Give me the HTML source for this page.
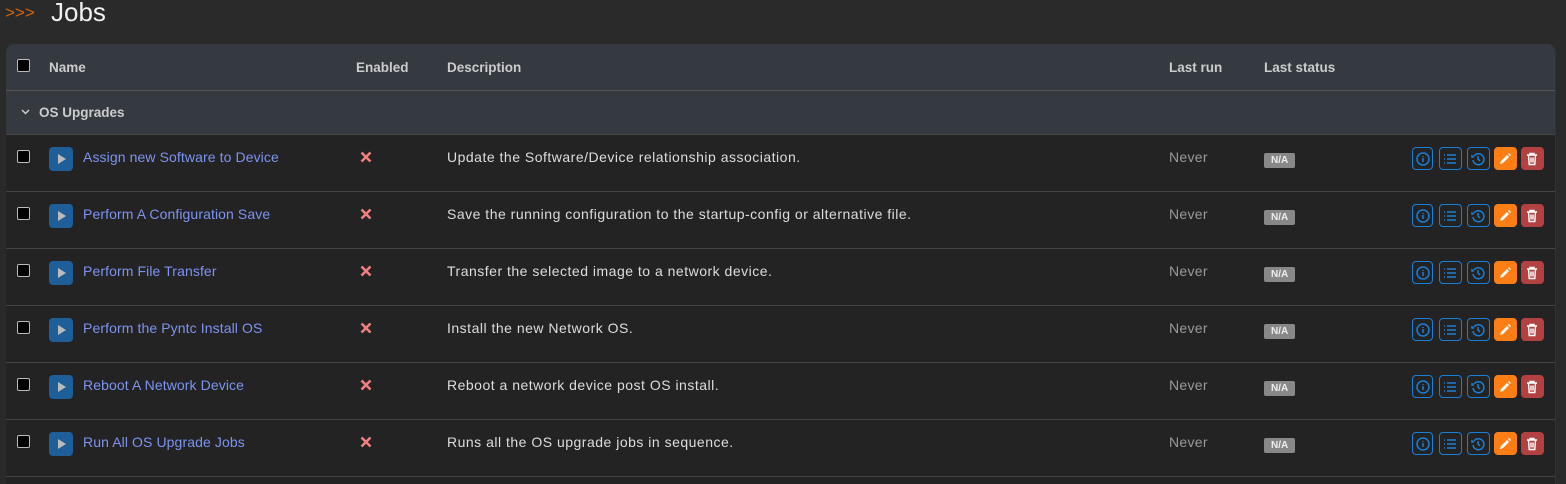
<!DOCTYPE html><html><head><style>
body{margin:0;background:#2a2a2a;width:1566px;height:478px;overflow:hidden;font-family:"Liberation Sans",sans-serif;color:#ddd}
.ar{position:absolute;left:5px;top:3px;color:#d8640a;font-size:17px;letter-spacing:0px}
.jt{position:absolute;left:51px;top:-3px;font-size:26px;color:#f0f0f0}
.panel{position:absolute;left:6px;top:44px;width:1549px;height:440px;background:#232323;border-radius:8px 8px 0 0;overflow:hidden;border-right:1px solid #333}
.hd{height:46px;background:#343a40;border-bottom:1px solid #555;position:relative;font-weight:bold;font-size:13.5px;color:#ccc}
.grp{height:43px;background:#343a40;border-bottom:1px solid #444;position:relative;font-weight:bold;font-size:13.5px;color:#ccc}
.row{height:56px;border-bottom:1px solid #444;position:relative;font-size:14px}
.a{position:absolute}
.cb{position:absolute;left:11px;width:11px;height:11px;background:#000;border:1px solid #bbb;border-radius:2px}
.play{position:absolute;left:43px;top:12px;width:24px;height:24px;background:#1e5f99;border-radius:4px}
.play:after{content:"";position:absolute;left:9px;top:7px;border-left:8px solid #bbb;border-top:5px solid transparent;border-bottom:5px solid transparent}
.nm{left:77px;top:14px;color:#7d93f0;letter-spacing:0.1px}
.x{left:352px;top:13px;color:#f08080;font-size:16px}
.ds{left:441px;top:14px;color:#ddd;letter-spacing:0.5px}
.nv{left:1163px;top:14px;color:#999;letter-spacing:0.3px}
.na{left:1258px;top:18px;background:#888;color:#eee;font-size:10px;font-weight:bold;padding:2px 7px;border-radius:2px}
.b{position:absolute;top:12px;width:21px;height:23px;border:1px solid #1a7fd6;border-radius:4px;box-sizing:border-box}
.b svg{position:absolute;left:3px;top:4px}
</style></head><body>
<div class="ar">&gt;&gt;&gt;</div><div class="jt">Jobs</div>
<div class="panel">
<div class="hd"><div class="cb" style="top:15px"></div><span class="a" style="left:43px;top:16px">Name</span><span class="a" style="left:350px;top:16px">Enabled</span><span class="a" style="left:441px;top:16px">Description</span><span class="a" style="left:1163px;top:16px">Last run</span><span class="a" style="left:1258px;top:16px">Last status</span></div>
<div class="grp"><svg class="a" style="left:15px;top:18px" width="9" height="6" viewBox="0 0 9 6"><path d="M1 1l3.5 3.5L8 1" stroke="#ccc" stroke-width="1.5" fill="none"/></svg><span class="a" style="left:33px;top:14px">OS Upgrades</span></div>
<div id="rows"></div>
</div>
<script>
var d=[["Assign new Software to Device","Update the Software/Device relationship association."],["Perform A Configuration Save","Save the running configuration to the startup-config or alternative file."],["Perform File Transfer","Transfer the selected image to a network device."],["Perform the Pyntc Install OS","Install the new Network OS."],["Reboot A Network Device","Reboot a network device post OS install."],["Run All OS Upgrade Jobs","Runs all the OS upgrade jobs in sequence."]];
var h="";
var ic='<svg width="14" height="14" viewBox="0 0 14 14" fill="none" stroke="#1a7fd6" stroke-width="1.5">';
d.forEach(function(r){h+='<div class="row"><div class="cb" style="top:15px"></div><div class="play"></div><span class="a nm">'+r[0]+'</span><svg class="a" style="left:354px;top:16px" width="12" height="12" viewBox="0 0 12 12"><path d="M1.5 1.5l9 9M10.5 1.5l-9 9" stroke="#f08080" stroke-width="2.6"/></svg><span class="a ds">'+r[1]+'</span><span class="a nv">Never</span><span class="a na">N/A</span>'+
'<div class="b" style="left:1406px">'+ic+'<circle cx="7" cy="7" r="6"/><path d="M7 6v4M7 4v1"/></svg></div>'+
'<div class="b" style="left:1433px;width:23px">'+ic+'<path d="M1 3h1M1 7h1M1 11h1M4 3h9M4 7h9M4 11h9"/></svg></div>'+
'<div class="b" style="left:1461px;width:23px">'+ic+'<path d="M3 4A5.5 5.5 0 1 1 2 8M1 3v2h2M7 4v3l2 2"/></svg></div>'+
'<div class="b" style="left:1488px;width:23px;background:#fd7e14;border-color:#fd7e14"><svg width="14" height="14" viewBox="0 0 14 14"><path d="M2 12l1-3 6-6 2 2-6 6z M10 2l1-1 2 2-1 1z" fill="#fff"/></svg></div>'+
'<div class="b" style="left:1515px;width:23px;background:#b34141;border-color:#b34141"><svg width="14" height="14" viewBox="0 0 14 14" fill="none" stroke="#fff" stroke-width="1.4"><path d="M2 3h10M5 3V1.5h4V3M3.5 3l.7 9.5h5.6l.7-9.5M6 5.5v5M8 5.5v5"/></svg></div></div>'});
document.getElementById("rows").innerHTML=h;
</script>
</body></html>
